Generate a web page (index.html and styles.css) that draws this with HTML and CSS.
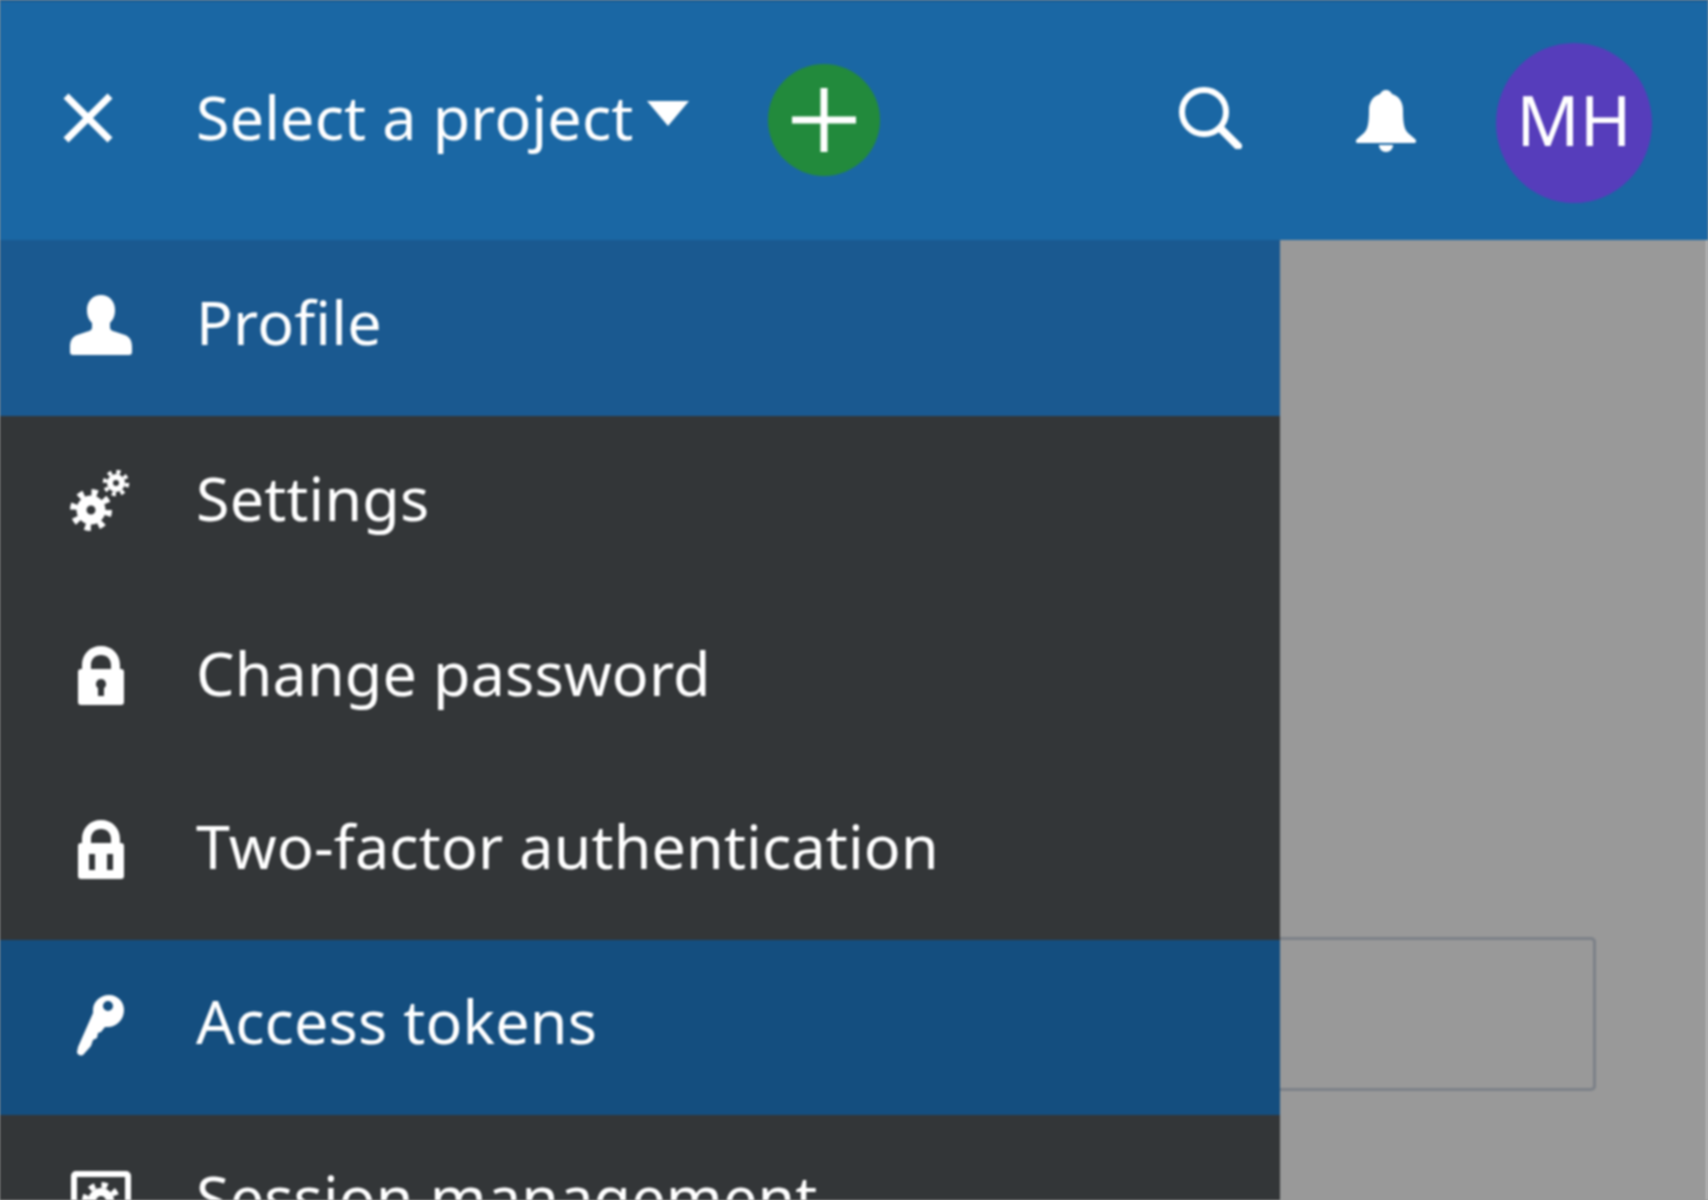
FILE: index.html
```html
<!DOCTYPE html>
<html lang="en">

<head>
    <meta charset="UTF-8">
    <title>Access tokens</title>
    <link rel="stylesheet" href="styles.css">
</head>

<body>
    <div class="app">
        <header class="topbar">
            <button class="close-btn" aria-label="Close menu">
                <svg class="icon-close" viewBox="0 0 50 50">
                    <path d="M3 3l44 44M47 3L3 47" />
                </svg>
            </button>
            <a class="project-select" href="#">Select a project</a>
            <svg class="caret" viewBox="0 0 42 25">
                <path d="M0 0h42L21 25z" />
            </svg>
            <button class="new-btn" aria-label="Create new">
                <svg viewBox="0 0 64 64">
                    <path d="M32 0v64M0 32h64" />
                </svg>
            </button>
            <div class="topbar-right">
                <svg class="icon-search" viewBox="0 0 64 64">
                    <circle cx="26" cy="27" r="22" />
                    <path d="M43 44l17 17" />
                </svg>
                <svg class="icon-bell" viewBox="0 0 64 64">
                    <path d="M32 2c3 0 5 2 6 4 7 2 11 8 11 16 0 12 1 19 5 23l7 6c2 2 1 4-1 4H4c-2 0-3-2-1-4l7-6c4-4 5-11 5-23 0-8 4-14 11-16 1-2 3-4 6-4z" />
                    <path d="M25 57h14c0 4-3 7-7 7s-7-3-7-7z" />
                </svg>
                <div class="avatar">MH</div>
            </div>
        </header>

        <div class="layout">
            <nav class="sidebar">
                <a class="nav-row active" href="#">
                    <svg viewBox="0 0 64 64">
                        <path d="M32 1c8 0 14 6 14 15 0 6-2 10-5 13v4c0 3 2 4 6 5l9 3c5 2 7 6 7 12v5c0 2-1 3-3 3H4c-2 0-3-1-3-3v-5c0-6 2-10 7-12l9-3c4-1 6-2 6-5v-4c-3-3-5-7-5-13C18 7 24 1 32 1z" />
                    </svg>
                    Profile
                </a>
                <a class="nav-row" href="#">
                    <svg class="gears" viewBox="0 0 64 64">
                        <circle class="gear-body" cx="22" cy="40" r="9.5" stroke-width="10" />
                        <circle class="gear-teeth" cx="22" cy="40" r="17.5" stroke-width="7" stroke-dasharray="6 7.74" />
                        <circle class="gear-body" cx="47" cy="13" r="6" stroke-width="6" />
                        <circle class="gear-teeth" cx="47" cy="13" r="11" stroke-width="4.5" stroke-dasharray="4 4.64" />
                    </svg>
                    Settings
                </a>
                <a class="nav-row short" href="#">
                    <svg viewBox="0 0 64 64">
                        <path fill-rule="evenodd" d="M32 2C21 2 13 10 13 21v4h-1a3 3 0 0 0-3 3v30a3 3 0 0 0 3 3h40a3 3 0 0 0 3-3V28a3 3 0 0 0-3-3h-1v-4C51 10 43 2 32 2zM22 25v-4c0-6 4-10 10-10s10 4 10 10v4zM32 35a5 5 0 0 1 3 9v8h-6v-8a5 5 0 0 1 3-9z" />
                    </svg>
                    Change password
                </a>
                <a class="nav-row" href="#">
                    <svg viewBox="0 0 64 64">
                        <path fill-rule="evenodd" d="M32 2C21 2 13 10 13 21v4h-1a3 3 0 0 0-3 3v30a3 3 0 0 0 3 3h40a3 3 0 0 0 3-3V28a3 3 0 0 0-3-3h-1v-4C51 10 43 2 32 2zM22 25v-4c0-6 4-10 10-10s10 4 10 10v4zM20 36h6v16h-6zM38 36h6v16h-6z" />
                    </svg>
                    Two-factor authentication
                </a>
                <a class="nav-row current" href="#">
                    <svg viewBox="0 0 64 64">
                        <path fill-rule="evenodd" transform="translate(-2 0)" d="M42 1c9 0 15 7 15 15 0 10-8 17-16 17h-3l-4 5-3 1-1 5-4 2-2 6-8 9c-2 1-6 0-6-3l1-5 15-34v-3C26 8 33 1 42 1zM41 7a5 5 0 1 0 0 10 5 5 0 0 0 0-10z" />
                    </svg>
                    Access tokens
                </a>
                <a class="nav-row" href="#">
                    <svg class="session" viewBox="0 0 64 64">
                        <path fill-rule="evenodd" d="M7 2h50a5 5 0 0 1 5 5v50a5 5 0 0 1-5 5H7a5 5 0 0 1-5-5V7a5 5 0 0 1 5-5zM8 8v48h48V8z" />
                        <circle class="gear-body" cx="32" cy="32" r="9" stroke-width="8" />
                        <circle class="gear-teeth" cx="32" cy="32" r="16" stroke-width="6" stroke-dasharray="6 6.57" />
                    </svg>
                    Session management
                </a>
            </nav>
            <main class="backdrop">
                <div class="token-box"></div>
            </main>
        </div>
    </div>
</body>

</html>
```

FILE: styles.css
```css
* {
    margin: 0;
    padding: 0;
    box-sizing: border-box;
}

html,
body {
    height: 1200px;
    overflow: hidden;
    background: #999999;
}

body {
    font-family: "Noto Sans", "Open Sans", sans-serif;
    font-size: 61px;
    letter-spacing: 0.15px;
    color: #ffffff;
}

a {
    color: #ffffff;
    text-decoration: none;
}

button {
    border: none;
    background: none;
}

.app {
    height: 1200px;
    filter: blur(1.1px);
}

/* top bar */
.topbar {
    display: flex;
    align-items: center;
    height: 240px;
    padding-left: 63px;
    padding-right: 56px;
    background: #1a67a4;
    border-top: 2px solid #195c93;
}

.close-btn {
    display: flex;
    width: 50px;
    height: 50px;
    margin-top: -6px;
}

.icon-close {
    width: 50px;
    height: 50px;
    fill: none;
    stroke: #ffffff;
    stroke-width: 7;
}

.project-select {
    margin-left: 83px;
    margin-top: -8px;
    line-height: 76px;
}

.caret {
    width: 42px;
    height: 25px;
    margin-left: 13px;
    margin-top: -16px;
    fill: #ffffff;
}

.new-btn {
    display: flex;
    align-items: center;
    justify-content: center;
    width: 112px;
    height: 112px;
    margin-left: 79px;
    margin-top: -2px;
    border-radius: 50%;
    background: #228a3c;
}

.new-btn svg {
    width: 64px;
    height: 64px;
    fill: none;
    stroke: #ffffff;
    stroke-width: 7;
}

.topbar-right {
    display: flex;
    align-items: center;
    margin-left: auto;
}

.icon-search {
    width: 64px;
    height: 64px;
    margin-top: -8px;
    fill: none;
    stroke: #ffffff;
    stroke-width: 6;
    stroke-linecap: round;
}

.icon-search path {
    stroke-width: 8;
}

.icon-bell {
    width: 64px;
    height: 64px;
    margin-left: 112px;
    margin-top: -2px;
    fill: #ffffff;
}

.avatar {
    width: 156px;
    height: 160px;
    margin-left: 78px;
    margin-top: 4px;
    border-radius: 50%;
    background: #563dbb;
    font-size: 70px;
    letter-spacing: 0;
    line-height: 152px;
    text-align: center;
}

/* body of the page */
.layout {
    display: flex;
    height: 960px;
}

.sidebar {
    flex: 0 0 1280px;
    overflow: hidden;
    background: #333638;
}

.nav-row {
    display: flex;
    align-items: center;
    gap: 63px;
    height: 176px;
    padding-left: 69px;
    padding-bottom: 14px;
    white-space: nowrap;
}

.nav-row svg {
    flex: none;
    width: 64px;
    height: 64px;
    margin-top: 10px;
    fill: #ffffff;
}

.nav-row.short {
    height: 172px;
    padding-bottom: 12px;
}

.nav-row.short svg {
    margin-top: 7px;
}

.nav-row.active {
    background: #1a5990;
}

.nav-row.current {
    height: 175px;
    background: #144e7f;
}

.gear-body,
.gear-teeth {
    fill: none;
    stroke: #ffffff;
}

.backdrop {
    flex: 1;
    padding-top: 697px;
    padding-right: 112px;
    border-right: 2px solid #b9b9b9;
    background: #999999;
}

.token-box {
    height: 154px;
    margin-right: -2px;
    border: 3px solid #7c8188;
    border-left: none;
    border-radius: 0 5px 5px 0;
}
```
